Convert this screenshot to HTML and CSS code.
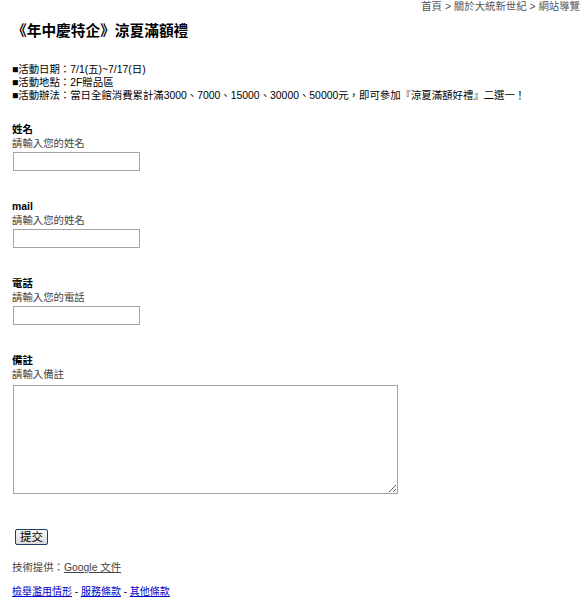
FILE: index.html
```html
<!DOCTYPE html>
<html lang="zh-Hant">
<head>
    <meta charset="UTF-8">
    <title>《年中慶特企》涼夏滿額禮</title>
    <link rel="stylesheet" href="styles.css">
</head>
<body>
    <div class="breadcrumb">首頁 &gt; 關於大統新世紀 &gt; 網站導覽</div>

    <div class="page">
        <h1 class="title">《年中慶特企》涼夏滿額禮</h1>

        <div class="info">
            <div>■活動日期：7/1(五)~7/17(日)</div>
            <div>■活動地點：2F贈品區</div>
            <div>■活動辦法：當日全館消費累計滿3000、7000、15000、30000、50000元，即可參加『涼夏滿額好禮』二選一！</div>
        </div>

        <form class="form">
            <div class="item">
                <div class="label">姓名</div>
                <div class="hint">請輸入您的姓名</div>
                <input class="text-input" type="text">
            </div>
            <div class="item">
                <div class="label">mail</div>
                <div class="hint">請輸入您的姓名</div>
                <input class="text-input" type="text">
            </div>
            <div class="item">
                <div class="label">電話</div>
                <div class="hint">請輸入您的電話</div>
                <input class="text-input" type="text">
            </div>
            <div class="item">
                <div class="label">備註</div>
                <div class="hint">請輸入備註</div>
                <textarea class="note"></textarea>
            </div>
            <button class="submit" type="button">提交</button>
        </form>

        <div class="powered">技術提供：<a href="#">Google 文件</a></div>
        <div class="footer-links">
            <a href="#">檢舉濫用情形</a> - <a href="#">服務條款</a> - <a href="#">其他條款</a>
        </div>
    </div>
</body>
</html>
```

FILE: styles.css
```css
body {
    margin: 0;
    background: #fff;
    color: #000;
    font-family: "Liberation Sans", "Noto Sans CJK TC", sans-serif;
    font-size: 10.4px;
}
.breadcrumb {
    text-align: right;
    padding-right: 4px;
    line-height: 14px;
    color: #555;
}
.page {
    padding: 0 12px;
}
.title {
    margin: 7px 0 0;
    font-size: 14.7px;
    line-height: 20px;
    font-weight: bold;
}
.info {
    margin-top: 22px;
    line-height: 13px;
}
.form {
    margin-top: 21px;
}
.item {
    margin-bottom: 29px;
}
.label {
    font-weight: bold;
    line-height: 14px;
}
.hint {
    color: #444;
    line-height: 14px;
}
.text-input {
    display: block;
    box-sizing: border-box;
    margin: 1px 0 0 1px;
    width: 127px;
    height: 19px;
    border: 1px solid #a5a5a5;
    padding: 0 2px;
}
.note {
    display: block;
    box-sizing: border-box;
    margin: 3px 0 0 1px;
    width: 385px;
    height: 109px;
    border: 1px solid #a5a5a5;
}
.submit {
    margin: 6px 0 0 3px;
    height: 16px;
    padding: 0 4px;
    font-family: "Liberation Sans", "Noto Sans CJK TC", sans-serif;
    font-size: 11.5px;
    line-height: 12px;
    color: #000;
    background: linear-gradient(#f6f6f6, #dcdcdc);
    border: 1px solid #1d3f66;
    border-radius: 2px;
}
.powered {
    margin-top: 16px;
    line-height: 14px;
    color: #444;
}
.powered a {
    color: #444;
}
.footer-links {
    margin-top: 10px;
    line-height: 14px;
    font-size: 10px;
}
.footer-links a {
    color: #0000cc;
}
```
